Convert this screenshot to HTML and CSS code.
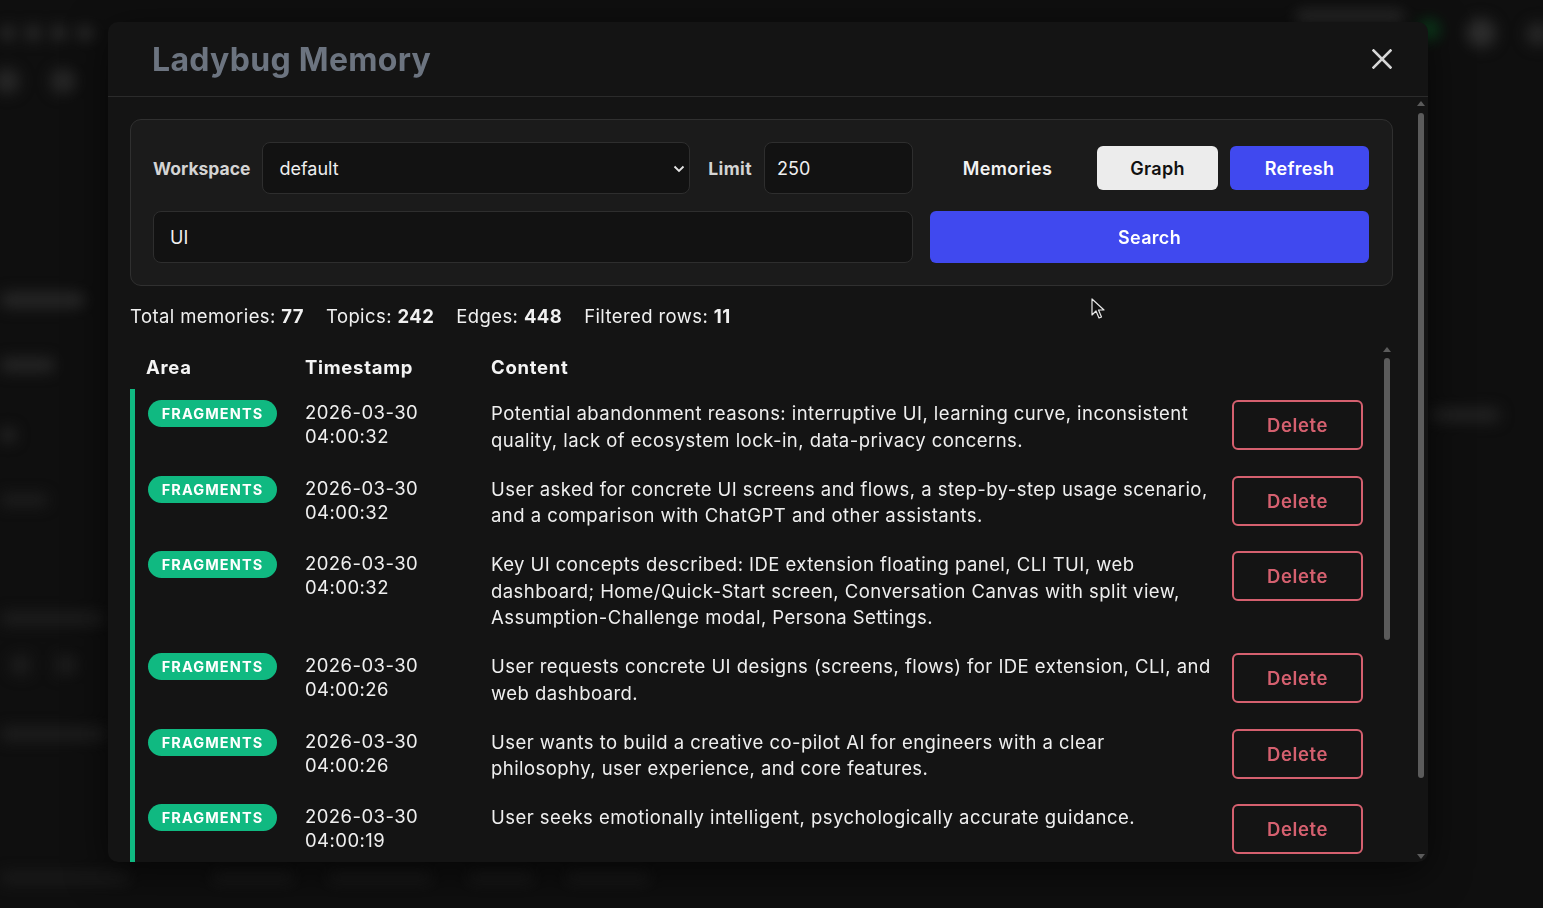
FILE: index.html
```html
<!DOCTYPE html>
<html>
<head>
  <meta charset="utf-8" />
  <title>Ladybug Memory</title>
  <link rel="stylesheet" href="styles.css">
</head>
<body>
  <div class="backdrop">
    <span class="blob b-dots"></span>
    <span class="blob b-c1"></span>
    <span class="blob b-c2"></span>
    <span class="blob b-l1"></span>
    <span class="blob b-l2"></span>
    <span class="blob b-l3"></span>
    <span class="blob b-l4"></span>
    <span class="blob b-l5"></span>
    <span class="blob b-l6"></span>
    <span class="blob b-l7"></span>
    <span class="blob b-tr"></span>
    <span class="blob b-green"></span>
    <span class="blob b-r1"></span>
    <span class="blob b-r2"></span>
    <span class="blob b-r3"></span>
    <span class="blob b-f1"></span>
    <span class="blob b-f2"></span>
    <span class="blob b-f3"></span>
    <span class="blob b-f4"></span>
    <span class="blob b-f5"></span>
  </div>

  <div class="overlay">
    <div class="modal">
      <div class="modal-header">
        <h1 class="modal-title">Ladybug Memory</h1>
        <button class="close" type="button" aria-label="Close">
          <svg width="20" height="20" viewBox="0 0 20 20"><path d="M1.5 1.5 L18.5 18.5 M18.5 1.5 L1.5 18.5" stroke="#d6d6d6" stroke-width="2.6" stroke-linecap="square"/></svg>
        </button>
      </div>

      <div class="modal-body">
        <div class="panel">
          <div class="panel-row">
            <label class="field-label" for="workspace">Workspace</label>
            <div class="select-wrap">
              <select id="workspace" class="input select">
                <option>default</option>
              </select>
              <svg class="chevron" width="12" height="8" viewBox="0 0 12 8"><path d="M1.5 1.5 L6 6 L10.5 1.5" fill="none" stroke="#e6e6e6" stroke-width="1.8"/></svg>
            </div>
            <label class="field-label limit-label" for="limit">Limit</label>
            <input id="limit" class="input limit" type="text" value="250">
          </div>
          <div class="tab-row">
            <button class="tab" type="button">Memories</button>
            <button class="tab tab-light" type="button">Graph</button>
            <button class="tab tab-blue" type="button">Refresh</button>
          </div>
          <input class="input search-input" type="text" value="UI">
          <button class="btn-search" type="button">Search</button>
        </div>

        <div class="stats">
          <span>Total memories: <b>77</b></span>
          <span>Topics: <b>242</b></span>
          <span>Edges: <b>448</b></span>
          <span>Filtered rows: <b>11</b></span>
        </div>

        <div class="table-box">
          <div class="table-wrap">
            <table class="memories">
              <thead>
                <tr>
                  <th class="col-area">Area</th>
                  <th class="col-time">Timestamp</th>
                  <th class="col-content">Content</th>
                  <th class="col-action"></th>
                </tr>
              </thead>
              <tbody>
                <tr>
                  <td class="area"><span class="badge">FRAGMENTS</span></td>
                  <td class="time">2026-03-30<br>04:00:32</td>
                  <td class="content">Potential abandonment reasons: interruptive UI, learning curve, inconsistent quality, lack of ecosystem lock-in, data-privacy concerns.</td>
                  <td class="action"><button class="btn-delete" type="button">Delete</button></td>
                </tr>
                <tr>
                  <td class="area"><span class="badge">FRAGMENTS</span></td>
                  <td class="time">2026-03-30<br>04:00:32</td>
                  <td class="content">User asked for concrete UI screens and flows, a step-by-step usage scenario, and a comparison with ChatGPT and other assistants.</td>
                  <td class="action"><button class="btn-delete" type="button">Delete</button></td>
                </tr>
                <tr>
                  <td class="area"><span class="badge">FRAGMENTS</span></td>
                  <td class="time">2026-03-30<br>04:00:32</td>
                  <td class="content">Key UI concepts described: IDE extension floating panel, CLI TUI, web dashboard; Home/Quick-Start screen, Conversation Canvas with split view, Assumption-Challenge modal, Persona Settings.</td>
                  <td class="action"><button class="btn-delete" type="button">Delete</button></td>
                </tr>
                <tr>
                  <td class="area"><span class="badge">FRAGMENTS</span></td>
                  <td class="time">2026-03-30<br>04:00:26</td>
                  <td class="content">User requests concrete UI designs (screens, flows) for IDE extension, CLI, and web dashboard.</td>
                  <td class="action"><button class="btn-delete" type="button">Delete</button></td>
                </tr>
                <tr>
                  <td class="area"><span class="badge">FRAGMENTS</span></td>
                  <td class="time">2026-03-30<br>04:00:26</td>
                  <td class="content">User wants to build a creative co-pilot AI for engineers with a clear philosophy, user experience, and core features.</td>
                  <td class="action"><button class="btn-delete" type="button">Delete</button></td>
                </tr>
                <tr>
                  <td class="area"><span class="badge">FRAGMENTS</span></td>
                  <td class="time">2026-03-30<br>04:00:19</td>
                  <td class="content">User seeks emotionally intelligent, psychologically accurate guidance.</td>
                  <td class="action"><button class="btn-delete" type="button">Delete</button></td>
                </tr>
                <tr>
                  <td class="area"><span class="badge">FRAGMENTS</span></td>
                  <td class="time">2026-03-30<br>04:00:19</td>
                  <td class="content">Preferred tone: calm, direct, no filler; UI should surface assumptions before answering.</td>
                  <td class="action"><button class="btn-delete" type="button">Delete</button></td>
                </tr>
                <tr>
                  <td class="area"><span class="badge">FRAGMENTS</span></td>
                  <td class="time">2026-03-30<br>04:00:12</td>
                  <td class="content">Dashboard should show memory topics as a graph with filterable edges.</td>
                  <td class="action"><button class="btn-delete" type="button">Delete</button></td>
                </tr>
              </tbody>
            </table>
          </div>
          <div class="vscroll vscroll-inner">
            <span class="arrow-up"></span>
            <span class="thumb"></span>
          </div>
        </div>
      </div>

      <div class="vscroll vscroll-outer">
        <span class="arrow-up"></span>
        <span class="thumb"></span>
        <span class="spacer"></span>
        <span class="arrow-down"></span>
      </div>
    </div>
  </div>

  <svg class="cursor" width="14" height="22" viewBox="0 0 14 22"><path d="M1 1 L1 17 L5 13 L8 20 L10.5 19 L7.5 12 L13 12 Z" fill="#111" stroke="#e8e8e8" stroke-width="1.2" stroke-linejoin="round"/></svg>
</body>
</html>
```

FILE: styles.css
```css
html, body {
  margin: 0;
  padding: 0;
  height: 100%;
}
body {
  background-color: #0f0f0f;
  font-family: Inter, "Noto Sans", sans-serif;
  color: #efefef;
  overflow: hidden;
}
.backdrop {
  position: fixed;
  inset: 0;
  filter: blur(7px);
}
.blob {
  position: absolute;
  background-color: #262626;
  border-radius: 8px;
}
.b-dots { left: 0; top: 26px; width: 105px; height: 14px; background: repeating-linear-gradient(90deg, #2b2b2b 0 14px, transparent 14px 26px); }
.b-c1 { left: -6px; top: 68px; width: 26px; height: 26px; border-radius: 50%; }
.b-c2 { left: 50px; top: 68px; width: 26px; height: 26px; border-radius: 50%; }
.b-l1 { left: 0; top: 292px; width: 85px; height: 16px; }
.b-l2 { left: 0; top: 358px; width: 55px; height: 14px; }
.b-l3 { left: 0; top: 428px; width: 16px; height: 14px; }
.b-l4 { left: 0; top: 494px; width: 48px; height: 12px; background-color: #1e1e1e; }
.b-l5 { left: 0; top: 612px; width: 105px; height: 13px; background-color: #1e1e1e; }
.b-l6 { left: 10px; top: 655px; width: 70px; height: 20px; background: repeating-linear-gradient(90deg, #1c1c1c 0 20px, transparent 20px 46px); }
.b-l7 { left: 0; top: 727px; width: 108px; height: 14px; background-color: #1e1e1e; }
.b-tr { left: 1295px; top: 10px; width: 110px; height: 14px; background-color: #2a2a2a; }
.b-green { left: 1418px; top: 19px; width: 22px; height: 22px; border-radius: 50%; background-color: #0b3a1b; }
.b-r1 { left: 1466px; top: 18px; width: 30px; height: 30px; border-radius: 50%; background-color: #2c2c2c; }
.b-r2 { left: 1526px; top: 22px; width: 24px; height: 24px; border-radius: 50%; background-color: #262626; }
.b-r3 { left: 1430px; top: 408px; width: 70px; height: 14px; background-color: #222; }
.b-f1 { left: 0; top: 872px; width: 130px; height: 12px; background-color: #1a1a1a; }
.b-f2 { left: 212px; top: 872px; width: 82px; height: 12px; background-color: #1a1a1a; }
.b-f3 { left: 328px; top: 872px; width: 104px; height: 12px; background-color: #1a1a1a; }
.b-f4 { left: 468px; top: 872px; width: 66px; height: 12px; background-color: #1a1a1a; }
.b-f5 { left: 566px; top: 872px; width: 84px; height: 12px; background-color: #1a1a1a; }

.overlay {
  position: fixed;
  inset: 0;
  padding: 22px 0 0 108px;
}
.modal {
  position: relative;
  width: 1320px;
  height: 840px;
  background-color: #141414;
  border-radius: 10px;
  box-shadow: 0 10px 40px rgba(0, 0, 0, 0.6);
  display: flex;
  flex-direction: column;
  overflow: hidden;
}
.modal-header {
  flex: none;
  height: 74px;
  border-bottom: 1px solid #2b2b2b;
  display: flex;
  align-items: center;
  justify-content: space-between;
  padding: 0 36px 0 44px;
}
.modal-title {
  margin: 0;
  font-size: 32px;
  font-weight: 700;
  color: #6c7480;
  letter-spacing: 0.3px;
}
.close {
  background: none;
  border: none;
  padding: 0;
  width: 20px;
  height: 20px;
  cursor: pointer;
}
.close svg {
  display: block;
}
.modal-body {
  flex: 1;
  overflow: hidden;
  padding: 22px 35px 0 22px;
}

/* scrollbars drawn by hand: the headless shot hides native ones */
.vscroll {
  position: absolute;
  width: 10px;
  display: flex;
  flex-direction: column;
  align-items: center;
}
.vscroll .thumb {
  width: 6px;
  border-radius: 3px;
  background-color: #5b5b5b;
}
.arrow-up,
.arrow-down {
  width: 0;
  height: 0;
  border-left: 4px solid transparent;
  border-right: 4px solid transparent;
}
.arrow-up {
  border-bottom: 5px solid #5b5b5b;
}
.arrow-down {
  border-top: 5px solid #5b5b5b;
}
.spacer {
  flex: 1;
}
.vscroll-outer {
  left: 1308px;
  top: 79px;
  height: 758px;
}
.vscroll-outer .thumb {
  margin-top: 7px;
  height: 665px;
}
.vscroll-inner {
  right: 1px;
  top: 2px;
}
.vscroll-inner .thumb {
  margin-top: 6px;
  height: 282px;
}

.panel {
  border: 1px solid #303030;
  border-radius: 11px;
  background-color: #1b1b1b;
  padding: 22px;
  display: grid;
  grid-template-columns: 760px 439px;
  column-gap: 17px;
  row-gap: 17px;
  align-items: center;
}
.panel-row {
  display: flex;
  align-items: center;
  gap: 12px;
}
.field-label {
  font-size: 17.5px;
  font-weight: 700;
  color: #d4d4d4;
}
.limit-label {
  margin-left: 6px;
  letter-spacing: 0.4px;
}
.input {
  box-sizing: border-box;
  height: 52px;
  background-color: #121212;
  border: 1px solid #2e2e2e;
  border-radius: 8px;
  color: #efefef;
  font-family: inherit;
  font-size: 18px;
  padding: 0 16px;
  outline: none;
}
.select-wrap {
  position: relative;
  flex: 1;
}
.select {
  width: 100%;
  -webkit-appearance: none;
  appearance: none;
}
.chevron {
  position: absolute;
  right: 5px;
  top: 23px;
}
.limit {
  width: 149px;
  padding-left: 12px;
}
.search-input {
  width: 100%;
}
.tab-row {
  display: flex;
  align-items: center;
  gap: 12px;
}
.tab {
  height: 44px;
  border: none;
  border-radius: 6px;
  font-family: inherit;
  font-size: 18px;
  font-weight: 600;
  letter-spacing: 0.3px;
  cursor: pointer;
  background: none;
  color: #f2f2f2;
  width: 155px;
}
.tab-light {
  width: 121px;
  background-color: #ececec;
  color: #111;
}
.tab-blue {
  width: 139px;
  background-color: #4049ef;
  color: #fff;
}
.btn-search {
  height: 52px;
  border: none;
  border-radius: 6px;
  background-color: #4049ef;
  color: #fff;
  font-family: inherit;
  font-size: 18px;
  font-weight: 600;
  letter-spacing: 0.3px;
  cursor: pointer;
}

.stats {
  display: flex;
  gap: 22px;
  font-size: 18.5px;
  letter-spacing: 0.4px;
  color: #f0f0f0;
  margin: 17px 0 16px 0;
  line-height: 26px;
}
.stats b {
  font-weight: 700;
}

.table-box {
  position: relative;
  padding-right: 14px;
}
.table-wrap {
  height: 540px;
  overflow: hidden;
}
.memories {
  width: 100%;
  border-collapse: separate;
  border-spacing: 0;
  table-layout: fixed;
}
.memories th {
  text-align: left;
  font-size: 18.5px;
  font-weight: 700;
  letter-spacing: 0.7px;
  color: #f4f4f4;
  height: 44px;
  padding: 0 16px;
}
.col-area { width: 127px; }
.col-time { width: 154px; }
.col-action { width: 131px; }
.memories th.col-content {
  padding-right: 4px;
}
.memories td {
  vertical-align: top;
  padding: 11px 16px 11.5px 16px;
  font-size: 18.5px;
  letter-spacing: 0.45px;
}
.memories td.area {
  border-left: 5px solid #10b981;
  padding-left: 13px;
}
.memories td.content {
  padding-right: 4px;
}
.time {
  line-height: 24px;
}
.content {
  line-height: 26.5px;
}
.badge {
  display: block;
  width: 129px;
  height: 27px;
  line-height: 27px;
  text-align: center;
  border-radius: 14px;
  background-color: #10b981;
  color: #fff;
  font-size: 14.5px;
  font-weight: 700;
  letter-spacing: 1.1px;
}
.btn-delete {
  display: block;
  width: 131px;
  height: 50px;
  margin-bottom: 3px;
  border: 2px solid #d5606f;
  border-radius: 6px;
  background: none;
  color: #d5606f;
  font-family: inherit;
  font-size: 18.5px;
  font-weight: 600;
  letter-spacing: 0.6px;
  cursor: pointer;
}

.cursor {
  position: fixed;
  left: 1091px;
  top: 298px;
}
```
